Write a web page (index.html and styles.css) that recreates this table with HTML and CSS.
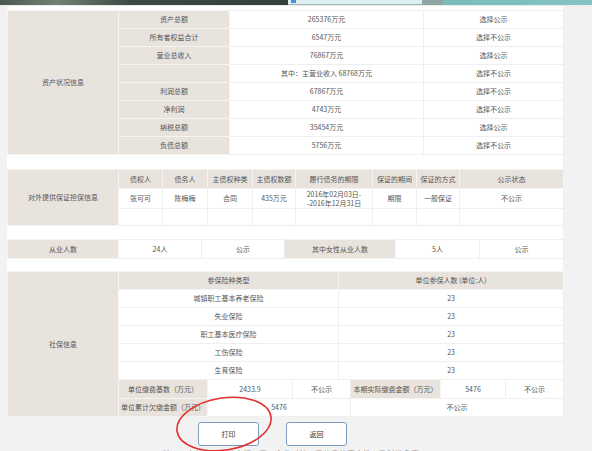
FILE: index.html
```html
<!DOCTYPE html>
<html lang="zh">
<head>
<meta charset="utf-8">
<title>企业信息</title>
<link rel="stylesheet" href="styles.css">
</head>
<body>
<div class="topbar">
  <div class="tb-dark"></div>
  <div class="tb-light"><span class="tb-icon"></span></div>
  <div class="tb-grey"></div>
  <div class="tb-teal"></div>
</div>
<div class="layout">
  <div class="panel">
    <table class="grid t1">
      <colgroup><col class="c111"><col class="c111"><col style="width:194px"><col style="width:140px"></colgroup>
      <tr><td class="hd" rowspan="8">资产状况信息</td><td class="hd">资产总额</td><td>265376万元</td><td>选择公示</td></tr>
      <tr><td class="hd">所有者权益合计</td><td>6547万元</td><td>选择不公示</td></tr>
      <tr><td class="hd">营业总收入</td><td>76867万元</td><td>选择公示</td></tr>
      <tr><td class="hd"></td><td>其中：主营业收入 68768万元</td><td>选择不公示</td></tr>
      <tr><td class="hd">利润总额</td><td>67867万元</td><td>选择不公示</td></tr>
      <tr><td class="hd">净利润</td><td>4743万元</td><td>选择不公示</td></tr>
      <tr><td class="hd">纳税总额</td><td>35454万元</td><td>选择公示</td></tr>
      <tr><td class="hd">负债总额</td><td>5756万元</td><td>选择不公示</td></tr>
    </table>

    <table class="grid t2">
      <colgroup><col class="c111"><col style="width:44px"><col style="width:45px"><col style="width:45px"><col style="width:43px"><col style="width:77px"><col style="width:44px"><col style="width:43px"><col style="width:104px"></colgroup>
      <tr class="r-head"><td class="hd" rowspan="3">对外提供保证担保信息</td><td class="hd">债权人</td><td class="hd">债务人</td><td class="hd">主债权种类</td><td class="hd">主债权数额</td><td class="hd">履行债务的期限</td><td class="hd">保证的期间</td><td class="hd">保证的方式</td><td class="hd">公示状态</td></tr>
      <tr class="r-data"><td>张可可</td><td>陈梅梅</td><td>合同</td><td>435万元</td><td class="dates">2016年02月03日-<br>-2016年12月31日</td><td>期限</td><td>一般保证</td><td>不公示</td></tr>
      <tr class="r-empty"><td></td><td></td><td></td><td></td><td></td><td></td><td></td><td></td></tr>
    </table>

    <table class="grid t3">
      <colgroup><col class="c111"><col style="width:83px"><col style="width:83px"><col style="width:111px"><col style="width:84px"><col style="width:84px"></colgroup>
      <tr><td class="hd">从业人数</td><td>24人</td><td>公示</td><td class="hd">其中女性从业人数</td><td>5人</td><td>公示</td></tr>
    </table>

    <table class="grid t4">
      <colgroup><col class="c111"><col style="width:89px"><col style="width:85px"><col style="width:46px"><col style="width:12px"><col style="width:90px"><col style="width:65px"><col style="width:58px"></colgroup>
      <tr><td class="hd" rowspan="9">社保信息</td><td class="hd" colspan="3">参保险种类型</td><td class="hd" colspan="4">单位参保人数 (单位:人)</td></tr>
      <tr><td colspan="3">城镇职工基本养老保险</td><td colspan="4">23</td></tr>
      <tr><td colspan="3">失业保险</td><td colspan="4">23</td></tr>
      <tr><td colspan="3">职工基本医疗保险</td><td colspan="4">23</td></tr>
      <tr><td colspan="3">工伤保险</td><td colspan="4">23</td></tr>
      <tr><td colspan="3">生育保险</td><td colspan="4">23</td></tr>
      <tr class="r-pay"><td class="hd">单位缴费基数（万元）</td><td>2433.9</td><td colspan="2">不公示</td><td class="hd">本期实际缴费金额（万元）</td><td>5476</td><td>不公示</td></tr>
      <tr><td class="hd">单位累计欠缴金额（万元）</td><td colspan="3">5476</td><td colspan="3">不公示</td></tr>
    </table>
  </div>

  <div class="actions">
    <button class="btn" type="button">打印</button>
    <button class="btn" type="button">返回</button>
    <svg class="mark" width="110" height="66" viewBox="0 0 110 66" aria-hidden="true">
      <ellipse cx="55" cy="33" rx="47.5" ry="26" transform="rotate(-9 55 33)" fill="none" stroke="#e2312f" stroke-width="1.6"/>
    </svg>
  </div>
  <p class="note">注：以上信息由企业自行公示，企业对其公示信息的真实性、及时性负责</p>
</div>
</body>
</html>
```

FILE: styles.css
```css
html, body {
  margin: 0;
  padding: 0;
}
body {
  background: #f2f2f2;
  font-family: "Noto Sans CJK SC", "Noto Sans", sans-serif;
  color: #555;
  overflow: hidden;
  height: 451px;
}
.topbar {
  display: flex;
  height: 5px;
  border-bottom: 1px solid #e9eceb;
}
.tb-dark {
  width: 288px;
  background: linear-gradient(90deg, #4c5a52 0%, #6f8275 20%, #3c4a43 45%, #34403b 100%);
}
.tb-light {
  width: 134px;
  background: #dcefee;
  border-bottom: 1px solid #9fb3b3;
  box-sizing: border-box;
  position: relative;
}
.tb-icon {
  position: absolute;
  left: 3px;
  top: 0;
  width: 5px;
  height: 3px;
  background: #4a8fd6;
}
.tb-grey {
  width: 21px;
  background: #8fa4a3;
}
.tb-teal {
  flex: 1;
  background: linear-gradient(90deg, #79bcbc, #84c4c2);
}
.layout {
  position: relative;
  padding-left: 7px;
}
.panel {
  width: 556px;
  background: #fff;
  padding-top: 4px;
}
.grid {
  width: 556px;
  border-collapse: collapse;
  table-layout: fixed;
  font-size: 7px;
  line-height: 9px;
}
.c111 { width: 111px; }
.grid td {
  padding: 0;
  height: 17px;
  text-align: center;
  vertical-align: middle;
  border: 1px solid #efefef;
  white-space: nowrap;
  overflow: hidden;
}
.grid td.hd {
  background: #e9e3dd;
  border-color: #f6f3f0;
}
.t1 { margin-bottom: 14px; }
.t2 { margin-bottom: 13px; }
.t2 .r-head td { height: 18px; }
.t2 .r-data td { height: 19px; }
.t2 td.dates { line-height: 9px; }
.t2 .r-empty td { height: 16px; }
.t3 { margin-bottom: 12px; }
.t3 td { height: 18px; }
.t4 .r-pay td { height: 18px; }
.actions {
  position: relative;
  display: flex;
  gap: 27px;
  padding-left: 191px;
  padding-top: 5px;
}
.btn {
  width: 61px;
  height: 24px;
  background: #fff;
  border: 1px solid #7c9cc1;
  border-radius: 3px;
  font-family: "Noto Sans CJK SC", sans-serif;
  font-size: 7px;
  color: #333;
  padding: 0;
}
.mark {
  position: absolute;
  left: 162px;
  top: -26px;
}
.note {
  margin: 3px 0 0 156px;
  font-size: 8px;
  color: #999;
  line-height: 10px;
}
```
